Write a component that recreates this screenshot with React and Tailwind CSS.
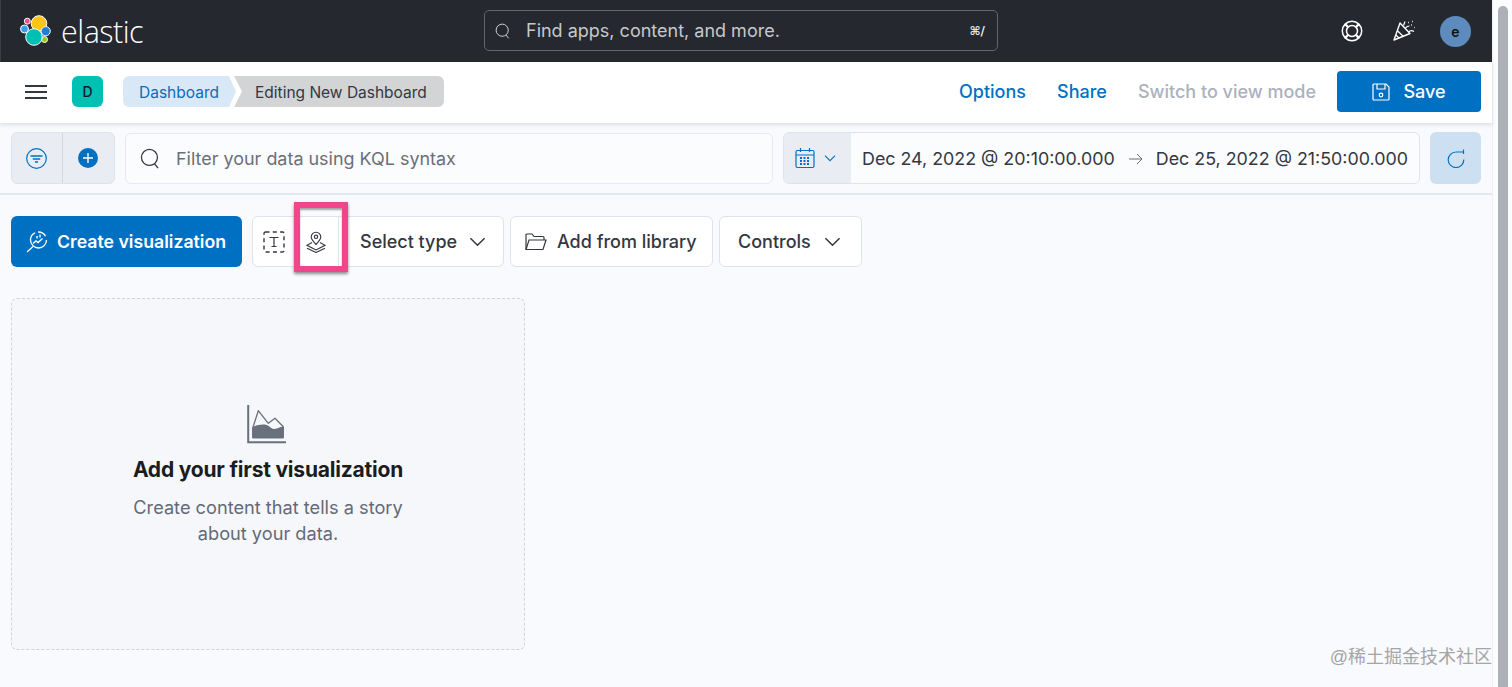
import React from "react";

const ElasticLogo = () => (
  <svg width="32" height="33" viewBox="0 0 32 33" className="block">
    <circle cx="7.3" cy="6.200" r="3" fill="#ee5097" stroke="#fff" strokeWidth="1" />
    <circle cx="19" cy="8.500" r="7.800" fill="#fec514" stroke="#fff" strokeWidth="1" />
    <circle cx="4.500" cy="14" r="4" fill="#36a2ef" stroke="#fff" strokeWidth="1" />
    <circle cx="25.700" cy="16.200" r="4.600" fill="#1c7ed6" stroke="#fff" strokeWidth="1" />
    <circle cx="24.500" cy="24.500" r="3" fill="#93c90e" stroke="#fff" strokeWidth="1" />
    <circle cx="14" cy="22" r="8.300" fill="#00bfb3" stroke="#fff" strokeWidth="1" />
  </svg>
);

const SearchIcon = ({ color, size = 20 }) => (
  <svg width={size} height={size} viewBox="0 0 20 20" fill="none" stroke={color} strokeWidth="1.2" className="block shrink-0">
    <circle cx="9" cy="9" r="7.6" />
    <path d="M13.8 15l3.4 4.2" />
  </svg>
);

const Chevron = ({ size = 18, color = "#343741", sw = 1.6 }) => (
  <svg width={size} height={size} viewBox="0 0 18 18" fill="none" stroke={color} strokeWidth={sw} className="block shrink-0">
    <path d="M1.500 5.500l7.500 7.500 7.500-7.500" />
  </svg>
);

function Header() {
  return (
    <header className="h-[62px] bg-[#25282f] flex items-center shrink-0 relative border-l border-[#3a3d44]">
      <div className="flex items-center pl-[19px] w-[482px] shrink-0">
        <ElasticLogo />
        <span className="ml-[9px] text-[30.500px] leading-[36px] text-white font-light tracking-[-0.5px] font-['Open_Sans',sans-serif]">elastic</span>
      </div>
      <div className="w-[514px] h-[41px] ml-[1px] mb-[1px] shrink-0 rounded-[5px] border border-[#62656c] flex items-center pl-[10px] pr-[12px] text-[#c5c8cd]">
        <SearchIcon color="#d4d6da" size={16} />
        <span className="ml-[15px] text-[18px] flex-1 font-['Inter',sans-serif]">Find apps, content, and more.</span>
        <span className="text-[12px] font-bold text-[#e6e7ea] font-['DejaVu_Sans',sans-serif]">⌘/</span>
      </div>
      <div className="flex-1" />
      <div className="flex items-center pr-[21px]">
        <svg width="22" height="22" viewBox="0 0 22 22" fill="none" stroke="#fff" strokeWidth="1.500" className="block">
          <circle cx="11" cy="11" r="9.700" />
          <circle cx="11" cy="11" r="5.500" />
          <path d="M4 4l3 3M18 4l-3 3M4 18l3-3M18 18l-3-3" strokeWidth="2.400" />
        </svg>
        <svg width="22" height="22" viewBox="0 0 22 22" fill="none" stroke="#fff" strokeWidth="1.400" strokeLinejoin="round" className="block ml-[30px]">
          <path d="M7 3L1 20l16-6.500z" />
          <path d="M4.200 10.500l6.200 6M2.800 15l3.500 3.300" strokeWidth="1.200" />
          <path d="M10.500 5.500l1.500-4M12.500 8c1-1.500 2.500-2 4-2M15.500 12c1.500-1.500 3.500-2 5.500-.5" strokeWidth="1.200" />
          <path d="M15 2.500h.8M18 5h.8M19 1.500h.8M21 7.500h.6" strokeWidth="1.300" />
        </svg>
        <div className="ml-[25px] w-[31px] h-[31px] rounded-full bg-[#5d8bbd] flex items-center justify-center text-[#111] text-[14px] font-semibold font-['Inter',sans-serif]">e</div>
      </div>
    </header>
  );
}

function SubHeader() {
  return (
    <div className="h-[61px] pb-[2px] bg-white flex items-center shrink-0 relative z-10 shadow-[0_2px_4px_rgba(60,70,90,0.15)] font-['Inter',sans-serif]">
      <svg width="22" height="16" viewBox="0 0 22 16" className="block ml-[25px]" stroke="#343741" strokeWidth="2.200">
        <path d="M0 2h22M0 8h22M0 14h22" />
      </svg>
      <div className="ml-[25px] w-[31px] h-[31px] rounded-[6px] bg-[#00bfb3] flex items-center justify-center text-[14px] font-medium text-[#0b1a1a]">D</div>
      <div className="ml-[20px] flex items-center h-[31px] text-[15.500px]">
        <div className="h-full pl-[16px] pt-[2px] flex items-center text-[#0f6ab4] bg-[#d9e8f6] rounded-l-[6px] [clip-path:polygon(0_0,calc(100%-7px)_0,100%_50%,calc(100%-7px)_100%,0_100%)] w-[113px]">Dashboard</div>
        <div className="h-full ml-[-2px] pl-[21px] pt-[2px] flex items-center text-[#343741] bg-[#d3d4d6] rounded-r-[6px] [clip-path:polygon(0_0,100%_0,100%_100%,0_100%,8px_50%)] w-[210px] whitespace-nowrap">Editing New Dashboard</div>
      </div>
      <div className="flex-1" />
      <div className="flex items-center text-[18px] font-medium pr-[11px]">
        <span className="text-[#0071c2]">Options</span>
        <span className="text-[#0071c2] ml-[31px]">Share</span>
        <span className="text-[#abb1bd] ml-[31px]">Switch to view mode</span>
        <button className="ml-[21px] w-[144px] h-[41px] rounded-[4px] bg-[#0071c2] text-white flex items-center justify-center font-medium text-[18px]">
          <svg width="18" height="18" viewBox="0 0 18 18" fill="none" stroke="#fff" strokeWidth="1.200" className="block mr-[13px]">
            <path d="M1 2a1 1 0 011-1h12l3 3v12a1 1 0 01-1 1H2a1 1 0 01-1-1z" />
            <path d="M5 1v5h8V1" />
            <circle cx="9" cy="12" r="1.800" />
          </svg>
          Save
        </button>
      </div>
    </div>
  );
}

function QueryBar() {
  return (
    <div className="h-[72px] shrink-0 flex items-center pl-[11px] pr-[11px] border-b-2 border-[#e3e7ee] font-['Inter',sans-serif]">
      <div className="w-[104px] h-[52px] rounded-[6px] bg-[#e9edf3] border border-[#dfe3ea] flex items-stretch shrink-0">
        <div className="w-[51px] pr-[1px] border-r border-[#d3d7de] flex items-center justify-center">
          <svg width="21" height="21" viewBox="0 0 21 21" fill="none" stroke="#0071c2" strokeWidth="1.200" className="block">
            <circle cx="10.500" cy="10.500" r="9.800" />
            <path d="M4.500 8h12M6.800 11h7.400M9 14h3" strokeWidth="1.400" />
          </svg>
        </div>
        <div className="flex-1 pr-[1px] flex items-center justify-center">
          <svg width="20" height="20" viewBox="0 0 20 20" className="block">
            <circle cx="10" cy="10" r="10" fill="#0071c2" />
            <path d="M10 5v10M5 10h10" stroke="#fff" strokeWidth="1.400" />
          </svg>
        </div>
      </div>
      <div className="ml-[10px] w-[648px] h-[51px] shrink-0 rounded-[6px] border border-[#e6e9ef] bg-[#fbfcfe] flex items-center pl-[14px]">
        <SearchIcon color="#343741" size={21} />
        <span className="ml-[15px] pt-[2px] text-[17.950px] text-[#6b6f76]">Filter your data using KQL syntax</span>
      </div>
      <div className="ml-[10px] w-[637px] h-[52px] shrink-0 rounded-[6px] border border-[#dfe3ea] bg-[#fbfcfe] flex items-stretch overflow-hidden">
        <div className="w-[67px] bg-[#e9edf3] flex items-center pl-[11px] shrink-0">
          <svg width="20" height="22" viewBox="0 0 20 22" fill="none" stroke="#0071c2" strokeWidth="1.200" className="block">
            <rect x="1" y="3.500" width="18" height="17" rx="1.500" />
            <path d="M1 8h18M5.500 1v4M14.500 1v4" />
            <path d="M5 11h10M5 14h10M5 17h10" strokeDasharray="2 1.500" strokeWidth="1.800" />
          </svg>
          <span className="ml-[9px]"><Chevron size={12} color="#0071c2" /></span>
        </div>
        <div className="flex-1 flex items-center pl-[11px] pt-[2px] text-[17.850px] text-[#343741] whitespace-nowrap">
          <span>Dec 24, 2022 @ 20:10:00.000</span>
          <svg width="16" height="14" viewBox="0 0 16 14" fill="none" stroke="#69707d" strokeWidth="1" className="block ml-[13px] mr-[12px]">
            <path d="M1 7h13M9 2l5 5-5 5" />
          </svg>
          <span>Dec 25, 2022 @ 21:50:00.000</span>
        </div>
      </div>
      <div className="ml-[10px] w-[51px] h-[52px] shrink-0 rounded-[6px] bg-[#cce0f2] flex items-center justify-center">
        <svg width="18" height="19" viewBox="0 0 18 19" fill="none" stroke="#0071c2" strokeWidth="1.200" className="block">
          <path d="M16.800 10.500A7.800 7.800 0 1 1 9 3h7.500" />
          <path d="M16.500 0.500V5" />
        </svg>
      </div>
    </div>
  );
}

const ToolBtn = ({ className, children }) => (
  <div className={"h-[51px] rounded-[6px] border border-[#dfe3ea] bg-white flex items-center shrink-0 text-[18px] font-medium text-[#343741] " + className}>
    {children}
  </div>
);

function Toolbar() {
  return (
    <div className="flex items-center pl-[11px] pt-[21px] gap-[6px] font-['Inter',sans-serif]">
      <button className="w-[231px] h-[51px] rounded-[6px] bg-[#0071c2] text-white text-[17.700px] font-semibold flex items-center pl-[15px] pt-[1px] shrink-0">
        <svg width="22" height="22" viewBox="0 0 22 22" fill="none" stroke="#fff" strokeWidth="1.300" className="block mr-[9px]">
          <circle cx="12.500" cy="9" r="8" strokeDasharray="34 3 9 4" />
          <path d="M1.500 20.500l5-4.500" strokeLinecap="round" />
          <path d="M7 12.500l3-2.500 2 1.500 4.500-4" strokeWidth="1.400" />
          <path d="M11 7.500V5M14 6.500V3.500" strokeWidth="1.400" />
        </svg>
        Create visualization
      </button>
      <div className="ml-[4px] w-[87px] h-[51px] rounded-l-[6px] border border-[#dfe3ea] bg-white flex items-center shrink-0 relative">
        <svg width="22" height="22" viewBox="0 0 22 22" fill="none" stroke="#343741" className="block ml-[10px]">
          <rect x="1" y="1" width="20" height="20" rx="1.500" strokeWidth="1.400" strokeDasharray="4 3.300" />
          <path d="M6.500 6.500h9M11 6.500v9M8.500 15.500h5" strokeWidth="1.200" />
        </svg>
        <svg width="20" height="22" viewBox="0 0 20 22" fill="none" stroke="#343741" strokeWidth="1.100" className="block ml-[21px]">
          <path d="M10 13.500c-3-3.200-4.800-5.300-4.800-7.500a4.800 4.800 0 0 1 9.600 0c0 2.200-1.800 4.300-4.800 7.500z" />
          <circle cx="10" cy="5.800" r="1.700" />
          <path d="M6 11.500L1 14.300l9 4.700 9-4.700-5-2.800" />
          <path d="M1 17.200l9 4.300 9-4.300" />
        </svg>
      </div>
      <div className="ml-[-6px] w-[165px] h-[51px] rounded-r-[6px] border border-l-0 border-[#dfe3ea] bg-white flex items-center pl-[21px] shrink-0 text-[18px] font-medium text-[#343741]">
        Select type
        <span className="ml-[12px]"><Chevron size={17} /></span>
      </div>
      <ToolBtn className="w-[203px] pl-[14px]">
        <svg width="22" height="18" viewBox="0 0 22 18" fill="none" stroke="#343741" strokeWidth="1.200" className="block mr-[10px]">
          <path d="M1 16.500V2a1 1 0 0 1 1-1h5l2 2.500h9a1 1 0 0 1 1 1V7" />
          <path d="M1 16.500L4 7h17l-3 9.500z" />
        </svg>
        Add from library
      </ToolBtn>
      <ToolBtn className="w-[143px] pl-[18px]">
        Controls
        <span className="ml-[13px]"><Chevron size={17} /></span>
      </ToolBtn>
    </div>
  );
}

function EmptyPanel() {
  return (
    <div className="ml-[11px] mt-[31px] w-[514px] h-[352px] rounded-[6px] border border-dashed border-[#cfd3da] bg-[#f5f7fa] flex flex-col items-center pt-[105px] font-['Inter',sans-serif] shrink-0">
      <svg width="40" height="40" viewBox="0 0 40 40" fill="none" className="block mr-[5px]">
        <path d="M2.200 1v37.200H40" stroke="#69707d" strokeWidth="2" />
        <path d="M6.700 34V24.300L12.300 6.700l10 12.600L29 14.300l8.300 8.400V34" stroke="#69707d" strokeWidth="1.300" strokeLinejoin="round" />
        <path d="M6.700 34.500V23c5-2 9-3 14-2 3 1 5 4 7 4 3 0 6-2 9.600-2.500v12z" fill="#69707d" />
      </svg>
      <h2 className="mt-[12px] text-[21px] leading-[28px] font-bold text-[#1a1c21] tracking-[-0.200px]">Add your first visualization</h2>
      <p className="mt-[11px] text-[18.200px] leading-[25.500px] text-[#646a77] text-center w-[300px]">Create content that tells a story about your data.</p>
    </div>
  );
}

export default function App() {
  return (
    <div className="w-[1512px] h-[687px] overflow-hidden flex bg-[#f8fafd] relative">
      <div className="flex-1 min-w-0 flex flex-col">
        <Header />
        <SubHeader />
        <QueryBar />
        <Toolbar />
        <EmptyPanel />
      </div>
      <div className="w-[20px] shrink-0 bg-[#fbfcfd] border-l border-[#eef0f3] pt-[6px] flex justify-center">
        <div className="w-[10px] h-[700px] rounded-full bg-[#aeb0b7]" />
      </div>
      <div className="absolute left-[294px] top-[202px] w-[54px] h-[70px] border-[6px] border-[#f0468c] shadow-[inset_0_2px_2px_rgba(0,0,0,0.35),0_2px_3px_rgba(0,0,0,0.45)]" />
      <div className="absolute right-[20px] bottom-[19px] text-[18px] leading-[22px] text-[#a5a5a5] font-['Liberation_Sans','Noto_Sans_CJK_SC',sans-serif]">@稀土掘金技术社区</div>
    </div>
  );
}
